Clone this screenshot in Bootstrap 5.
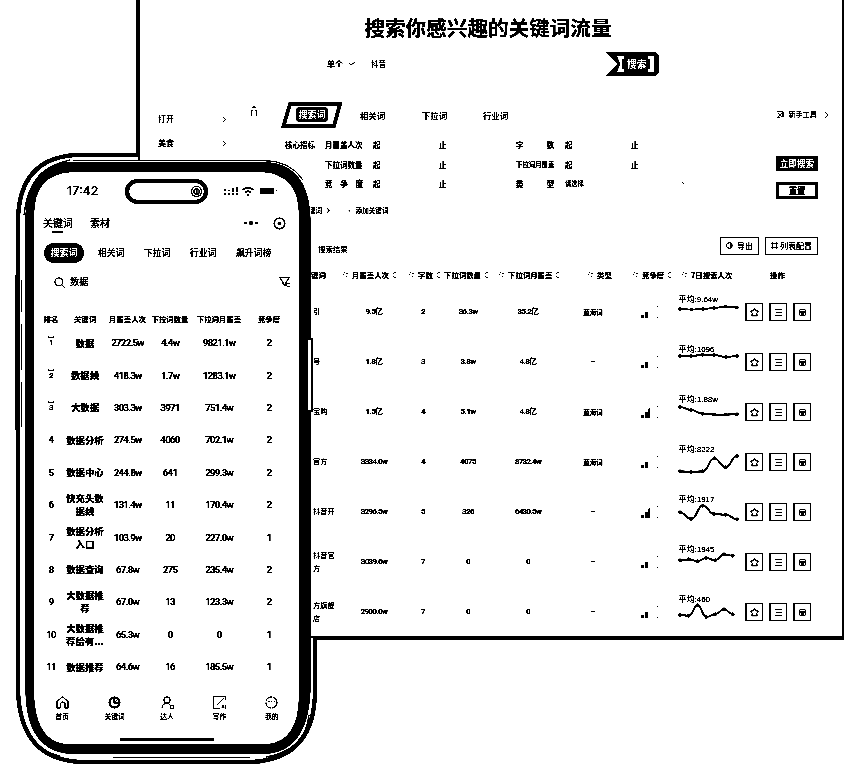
<!DOCTYPE html>
<html lang="zh-CN">
<head>
<meta charset="utf-8">
<meta name="viewport" content="width=device-width, initial-scale=1">
<title>关键词流量</title>
<link rel="stylesheet" href="https://cdn.jsdelivr.net/npm/bootstrap@5.3.0/dist/css/bootstrap.min.css">
<style>
html,body{margin:0;background:#fff}
body{font-family:"Noto Sans CJK SC",sans-serif;color:#000;font-size:8px;line-height:1;overflow:hidden}
.stage{width:844px;height:770px;filter:grayscale(1) brightness(.74) contrast(14)}
.stage svg{display:block;flex:none;overflow:visible}
.ln{fill:none;stroke:#000}
.desk{left:136px;top:0;width:708px;height:640px;border:4px solid #000;border-top:0;border-right-width:2px;white-space:nowrap}
.desk-title{font-size:20.6px;font-weight:600;height:24px;line-height:24px;margin:15px 0 0 -6px}
.search-row{height:24px;margin-top:13px;padding-left:187px}
.mid{margin-top:26px;height:26px;padding-left:142px}
.tab-d{font-size:8.4px;font-weight:500}
.side{width:122px;padding-left:18px;margin-top:-21px;height:48px;margin-bottom:-27px}
.side-line{height:24px;width:68px}
.filters{display:grid;grid-template-columns:40px 48px 66px 77px 49px 66px 140px auto;padding-left:145px;margin-top:7px;font-weight:500;font-size:7.5px}
.filters>div{height:19.6px;line-height:19.6px}
.filters b{font-weight:800}
.spread{width:38px;display:flex;justify-content:space-between}
.act{left:636px;top:156px;width:42px}
.act div{height:15px;line-height:15px;text-align:center;font-weight:900;font-size:8.6px}
.act .solid{background:#000;color:#fff}
.act .hollow{border:3px solid #000;height:17px;line-height:11px;margin-top:11px;font-size:8.6px}
.line-add{height:14px;margin-top:10px;padding-left:169px;font-size:6.6px;font-weight:500}
.result{height:18px;margin-top:19px;padding:0 24px 0 178px}
.boxed{border:1px solid #000;height:18px;border-radius:1px;font-size:8px}
.thead-d{display:grid;grid-template-columns:32px 66px 35px 55px 89px 45px 49px 88px auto;margin-left:171px;height:12px;margin-top:14px;font-size:7.4px;font-weight:700}
.row-d{display:grid;grid-template-columns:39px 48px 50px 40px 80px 50px 58px 66px 74px;margin-left:171px;height:50px;align-items:center;text-align:center}
.rows-d{margin-top:6px}
.num{font-family:Roboto,"Noto Sans CJK SC",sans-serif;font-weight:700;font-size:8px;letter-spacing:-.65px}
.sq{width:18px;height:18px;border:1px solid #000;border-left-width:2px}
.sq svg{margin-left:-1px}
.phone{left:0;top:0;width:340px;height:770px}
.screen{left:36px;top:174px;width:262px;height:569px;white-space:nowrap}
.status{height:34px;padding-left:31px}
.clock{font-family:Inter,sans-serif;font-weight:600;font-size:12.2px;width:58px}
.island{width:83px;height:25px;border:4px solid #000;border-radius:13px;padding-right:4px}
.nav-p{height:30px;font-size:10px;font-weight:500;padding:0 12px 0 7px}
.underbar{left:9px;top:13px;width:11px;height:2px;background:#000}
.pill{width:40px;height:20px;background:#000;color:#fff;border-radius:10px;line-height:20px;text-align:center;font-weight:900;font-size:9px}
.tabs-p{height:30px;font-size:8.8px;font-weight:500;padding-left:8px}
.find-p{height:28px;padding:0 7px 0 18px;font-size:9.2px;font-weight:500}
.grid-p{display:grid;grid-template-columns:30px 38px 47px 38px 60px 40px;align-items:center;text-align:center}
.head-p{height:14px;margin-top:16px;margin-bottom:1px;font-size:7.4px;font-weight:700}
.row-p{height:32.4px;font-weight:700}
.row-p .kw{font-size:9.4px;line-height:13px;font-weight:800}
.row-p .num{font-size:9.8px;letter-spacing:-.8px}
.foot-p{margin-top:13px;font-size:6.8px;font-weight:500}
.foot-p>div{width:52.8px}
.home{width:94px;height:3px;background:#000;border-radius:2px;margin:18px 0 0 84px}
</style>
</head>
<body>
<div class="stage position-relative overflow-hidden bg-white">
  <main class="desk position-absolute">
    <h1 class="desk-title text-center mb-0">搜索你感兴趣的关键词流量</h1>
    <div class="search-row d-flex align-items-center">
      <span style="width:22px;font-weight:500">单个</span>
      <svg width="6" height="4"><path class="ln" stroke-width=".8" d="M0 1l2 2 4-3"/></svg>
      <span class="ms-3" style="font-size:7.500px">抖音</span>
      <svg class="ms-auto" style="margin-right:183px" width="53" height="24" viewBox="0 0 53 24">
        <path d="M0 0H49L53 4V20L49 24H0L12 12Z"/><path fill="#fff" d="M11 4h7v3h-2v10h2v3h-7l3-8zM42 4h6v16h-6v-3h2V7h-2z"/>
        <text x="21" y="15.500" font-size="9.800" font-weight="900" fill="#fff">搜索</text>
      </svg>
    </div>
    <div class="mid d-flex align-items-center tab-d">
      <svg width="60" height="26" viewBox="0 0 60 26"><path class="ln" stroke-width="3.500" d="M8 2H58L52 24H1.500Z"/><rect x="14" y="5" width="32" height="15" rx="4"/><text x="16.500" y="16" font-size="9" font-weight="900" fill="#fff">搜索词</text></svg>
      <span style="margin-left:18px;width:62px">相关词</span><span style="width:61px">下拉词</span><span>行业词</span>
      <span class="ms-auto d-flex align-items-center fw-normal" style="padding-right:13px;font-size:7.200px"><svg class="me-1" width="7" height="7"><path class="ln" stroke-width=".8" d="M0 .5h6v6M1 2l4 4M5 2l-4 4M0 6.500h3"/></svg>新手工具<svg class="ms-2" width="4" height="6"><path class="ln" d="M0 0l3 3-3 3"/></svg></span>
    </div>
    <aside class="side">
      <div class="side-line d-flex align-items-center justify-content-between">打开<svg width="3" height="5"><path class="ln" d="M0 0l2.500 2.500L0 5"/></svg></div>
      <div class="side-line d-flex align-items-center justify-content-between" style="font-weight:500">美食<svg width="3" height="5"><path class="ln" d="M0 0l2.500 2.500L0 5"/></svg></div>
    </aside>
    <svg class="position-absolute" style="left:110px;top:106px" width="8" height="10"><path d="M3 0h2v1H3zM2 1h4v1H2zM1 4h2v1H1zM5 4h2v1H5zM1 5h1v5H1zM6 5h1v5H6z"/></svg>
    <section class="filters">
      <div style="font-weight:700">核心指标</div><div style="font-weight:700">月覆盖人次</div><div>起</div><div>止</div><div><span class="spread"><b>字</b><b>数</b></span></div><div>起</div><div>止</div><div></div>
      <div></div><div style="font-weight:700">下拉词数量</div><div>起</div><div>止</div><div style="font-size:6.400px;font-weight:700">下拉词月覆盖</div><div>起</div><div>止</div><div></div>
      <div></div><div><span class="spread"><b>竞</b><b>争</b><b>度</b></span></div><div>起</div><div>止</div><div><span class="spread"><b>类</b><b>型</b></span></div><div style="font-size:6.300px">请选择</div><div class="d-flex align-items-center" style="padding-left:51px"><svg width="3" height="3"><path class="ln" d="M0 0l2 2"/></svg></div><div></div>
    </section>
    <div class="act position-absolute"><div class="solid">立即搜索</div><div class="hollow">重置</div></div>
    <div class="line-add d-flex align-items-center"><span style="width:22px">键词</span><svg width="3" height="5" style="margin-left:-4px"><path class="ln" d="M0 0l2 2.500L0 5"/></svg><span style="margin-left:16px">•&nbsp; 添加关键词</span></div>
    <div class="result d-flex align-items-center">
      <span style="font-size:7.400px;padding-top:6px">搜索结果</span>
      <span class="boxed ms-auto d-flex align-items-center justify-content-center" style="width:39px"><svg width="7" height="7" class="me-1"><circle class="ln" cx="3.200" cy="3.500" r="2.800"/><path d="M4.500 1.500l3 2-3 2z"/></svg>导出</span>
      <span class="boxed d-flex align-items-center justify-content-center" style="width:53px;margin-left:6px"><svg width="7" height="7" style="margin-right:2px"><path class="ln" stroke-width=".8" d="M0 1.500h7M0 5.500h7M1.500 0v7M5.500 0v7"/></svg>列表配置</span>
    </div>
    <div class="thead-d" id="deskHead"></div>
    <div class="rows-d" id="deskRows"></div>
  </main>

  <div class="phone position-absolute">
    <svg class="position-absolute" width="340" height="770" viewBox="0 0 340 770">
      <path fill="#fff" d="M18 230Q18 155 78 155H138V160H262Q311 160 311 218V638H315V695Q315 762 250 762H85Q18 762 18 695Z"/>
      <path class="ln" stroke-width="4" d="M140 155H75Q18 159 18 222V690Q20 762 85 762H250Q315 760 315 690V638"/>
      <path class="ln" d="M73 160.500H262Q290 160 303 180M113 757.500H250M266 757Q305 750 309 715M30 735Q40 752 60 756M24 215Q28 168 70 160M21.500 280V312M21.500 324V370M21.500 382V427"/>
      <path fill-rule="evenodd" d="M70 162H262Q310 162 310.500 222V690Q308 754 262 754H72Q26 752 25.500 690V215Q28 164 70 162ZM72 172Q34 174 34 215V695Q36 744 70 744.500H266Q299 742 299 695V215Q299 174 262 172Z"/>
      <path class="ln" stroke="#fff" d="M308.500 205V218M308.500 226V335M308.500 415V470M308.500 490V515M308.500 552V570M308.500 612V638"/>
      <path fill="#fff" d="M308 340h4v70h-4z"/><path class="ln" stroke-width="1.500" d="M312 338V412M16 275V430"/>
    </svg>
    <div class="screen position-absolute">
      <div class="status d-flex align-items-center">
        <span class="clock">17:42</span>
        <span class="island d-flex align-items-center justify-content-end"><svg width="11" height="11" style="margin-right:-2px"><circle cx="5.500" cy="5.500" r="5.500"/><circle cx="5.500" cy="5.500" r="4" fill="none" stroke="#fff" stroke-width="1.300"/><path stroke="#fff" stroke-width="1.300" d="M4.500 4v3M7 4v3"/></svg></span>
        <svg style="margin-left:16px" width="14" height="9"><path d="M0 2h2v2H0zM0 6h2v2H0zM4 3h2v1H4zM4 6h2v2H4zM8 1h2v4H8zM8 6h2v2H8zM12 0h1.500v5H12zM12 6h1.500v2H12z"/></svg>
        <svg class="ms-1" width="12" height="9"><path class="ln" stroke-width="1.300" d="M.5 3Q6-1.500 11.500 3M3 5.500Q6 3 9 5.500"/><path d="M4.500 7L6 9l1.500-2z"/></svg>
        <svg style="margin-left:6px" width="17" height="6"><rect width="14" height="6" rx="1"/><path d="M16 2h1v1h-1z"/></svg>
      </div>
      <div class="nav-p d-flex align-items-center">
        <span class="position-relative" style="width:47px">关键词<i class="position-absolute underbar"></i></span><span>素材</span>
        <svg class="ms-auto" width="14" height="4"><circle cx="1.500" cy="2" r="1.200"/><circle cx="7" cy="2" r="2"/><circle cx="12.500" cy="2" r="1.200"/></svg>
        <svg style="margin-left:15px" width="13" height="13"><circle class="ln" cx="6.500" cy="6.500" r="5.300" stroke-width="1.200"/><circle cx="6.500" cy="6.500" r="1.800"/></svg>
      </div>
      <div class="tabs-p d-flex align-items-center"><span class="pill">搜索词</span><span style="margin-left:14px;width:46px">相关词</span><span style="width:46px">下拉词</span><span style="width:46px">行业词</span><span>飙升词榜</span></div>
      <div class="find-p d-flex align-items-center"><svg width="11" height="11"><circle class="ln" cx="4.800" cy="4.800" r="4"/><path class="ln" d="M8 8l2.500 2.500"/></svg><span style="margin-left:5px">数据</span>
        <svg class="ms-auto" width="12" height="11"><path class="ln" stroke-width=".9" d="M.5.500h10L7 5v4L4 7V5zM7.500 6.500h3M8 9.500h3"/></svg></div>
      <div class="grid-p head-p"><span>排名</span><span>关键词</span><span>月覆盖人次</span><span>下拉词数量</span><span>下拉词月覆盖</span><span>竞争度</span></div>
      <div id="phoneRows"></div>
      <div class="foot-p d-flex text-center" id="foot"></div>
      <div class="home"></div>
    </div>
  </div>
</div>
<script>
const byId = id => document.getElementById(id);
const sort = '<svg class="d-inline-block" style="margin-left:4px" width="4" height="8"><path d="M1 1h2v1H1zM0 2h1v1H0zM0 5h1v1H0zM1 6h2v1H1z"/></svg>';
const hint = '<svg class="d-inline-block" style="margin-right:4px" width="5" height="6"><path d="M1 0h1v1H1zM3 1h2v1H3zM0 2h1v1H0zM3 4h1v1H3z"/></svg>';
byId('deskHead').innerHTML = [['键词',0,0],['月覆盖人次',1,1],['字数',1,1],['下拉词数量',0,1],['下拉词月覆盖',1,1],['类型',1,0],['竞争度',1,1],['7日搜索人次',1,0],['操作',0,0]]
  .map(([t,h,s]) => `<span class="d-flex align-items-center">${h?hint:''}${t}${s?sort:''}</span>`).join('');
function curve(ys){
  const step = ys.length > 6 ? 8.8 : 11.4, p = ys.map((y,i) => [4 + i*step, y - 1]);
  let d = `M${p[0]}`;
  for(let i=1;i<p.length;i++){ const m=(p[i-1][0]+p[i][0])/2; d += `C${m} ${p[i-1][1]} ${m} ${p[i][1]} ${p[i]}`; }
  return `<path class="ln" stroke-width="1.700" d="${d}"/>` + p.map(a=>`<circle cx="${a[0]}" cy="${a[1]}" r="1.700"/>`).join('');
}
const icons = ['<path class="ln" d="M8.500 4.500l1.300 2.200 2.700.500-1.800 2 .3 2.600h-5l.3-2.600L4.500 7.200 7.200 6.700z"/>',
 '<path class="ln" d="M5.500 5.500h6M6 8.500h6M5.500 11.500h6"/>',
 '<rect class="ln" x="5.500" y="5.500" width="6" height="6" rx="1"/><path class="ln" d="M5 8h7M7 10h3"/>'];
const dash = '<svg class="mx-auto" width="4" height="1"><path d="M0 0h4v1H0z"/></svg>';
byId('deskRows').innerHTML = [
 ['引','9.5亿','2','36.3w','35.2亿','蓝海词',2,'9.64w',[23,23.5,23,22,20.5,21.5]],
 ['号','1.8亿','3','3.8w','4.8亿',dash,2,'1096',[20,20,18.7,19,21,20]],
 ['宝购','1.5亿','4','5.1w','4.8亿','蓝海词',3,'1.88w',[21,24,27.7,28.6,28.6,28.3]],
 ['官方','3334.0w','4','4075','8732.4w','蓝海词',2,'8222',[35.3,36,35.3,22.3,31.3,20]],
 ['抖音开','3296.5w','5','326','6430.5w',dash,3,'1917',[26.3,33,19.7,28,28.7,33.3]],
 ['抖音官<br>方','3039.6w','7','0','0',dash,2,'1945',[24.3,23.3,25.3,22,24.3,18.3,19.7]],
 ['方旗舰<br>店','2900.0w','7','0','0',dash,2,'460',[29,29.7,19.3,31,28.3,23.3,28.3]]
].map(r => `<div class="row-d"><span class="text-start" style="font-size:7.200px;line-height:13px;padding-left:2px">${r[0]}</span>`
 + r.slice(1,5).map(v=>`<span class="num">${v}</span>`).join('')
 + `<span style="font-size:6.500px;font-weight:700">${r[5]}</span>`
 + `<svg width="58" height="50"><path d="M23 28h3v3h-3zM27 25h3v6h-3z${r[6]>2?'M30 23l2-2v10h-2z':''}M39 19h1v1h-1zM39 30h1v1h-1z"/></svg>`
 + `<svg width="66" height="50"><text x="2.500" y="15" font-size="8" style="font-family:'Liberation Sans','Noto Sans CJK SC',sans-serif">平均:${r[7]}</text>${curve(r[8])}</svg>`
 + `<span class="d-flex" style="gap:6px;padding-left:3px">${icons.map(p=>`<span class="sq"><svg width="16" height="16">${p}</svg></span>`).join('')}</span></div>`).join('');
byId('phoneRows').innerHTML = [
 ['数据','2722.5w','4.4w','9821.1w',2],['数据线','418.3w','1.7w','1283.1w',2],['大数据','303.3w','3971','751.4w',2],
 ['数据分析','274.5w','4060','702.1w',2],['数据中心','244.8w','641','299.3w',2],['快充头数<br>据线','131.4w','11','170.4w',2],
 ['数据分析<br>入口','103.9w','20','227.0w',1],['数据查询','67.8w','275','235.4w',2],['大数据推<br>荐','67.0w','13','123.3w',2],
 ['大数据推<br>荐给有...','65.3w','0','0',1],['数据推荐','64.6w','16','185.5w',1]
].map((r,i) => `<div class="grid-p row-p"><span class="num position-relative"${i<3?' style="font-size:8px"':''}>${i+1}${i<3?'<svg class="position-absolute" style="left:11px;top:-3px" width="8" height="4"><path d="M1 0h1v1H1zM6 0h1v1H6zM1 1h6v1H1z"/></svg>':''}</span><span class="kw">${r[0]}</span>`
 + r.slice(1).map(v=>`<span class="num">${v}</span>`).join('') + '</div>').join('');
byId('foot').innerHTML = [
 ['首页','<path class="ln" stroke-width=".9" d="M1 12V5l5.500-4L12 5v7H9V7Q6.500 5 4.500 7v5z"/>'],
 ['关键词','<circle class="ln" cx="6.500" cy="6.500" r="5" stroke-width="1.800"/><path class="ln" d="M6 3v4h4M6 7l3-3"/>'],
 ['达人','<circle class="ln" cx="6" cy="4" r="3.200" stroke-width=".9"/><path class="ln" stroke-width=".9" d="M1 12q0-4 4-5M7 7l2 2M9.500 9.500h3v3h-3z"/>'],
 ['写作','<path class="ln" stroke-width=".9" d="M12.500 4V.5H.5v12h6M4 9l7-7M9 12l1-3 1 3M12.500 9v4"/>'],
 ['我的','<circle class="ln" cx="6.500" cy="6.500" r="5.500" stroke-dasharray="8 1"/><path class="ln" d="M3 5.500h2M6 5.500h1M9 5.500h1"/>']
].map(([t,p]) => `<div><svg class="mx-auto" width="13" height="13">${p}</svg><div style="margin-top:4px">${t}</div></div>`).join('');
</script>
<script src="https://cdn.jsdelivr.net/npm/bootstrap@5.3.0/dist/js/bootstrap.bundle.min.js"></script>
</body>
</html>
